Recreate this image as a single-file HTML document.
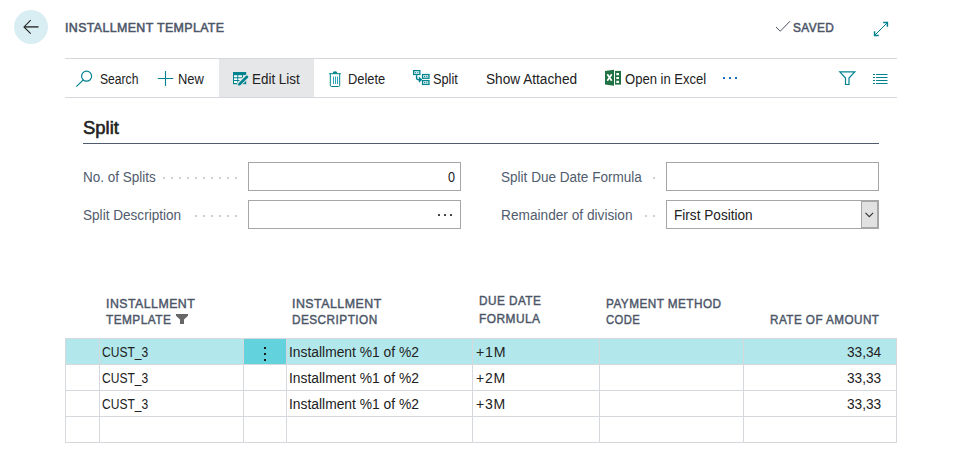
<!DOCTYPE html>
<html><head><meta charset="utf-8">
<style>
*{margin:0;padding:0;box-sizing:border-box}
html,body{width:958px;height:470px;overflow:hidden;background:#fff}
body{position:relative;font-family:"Liberation Sans",sans-serif;color:#212121}
.a{position:absolute;white-space:nowrap}
.t{font-size:14px;line-height:14px;color:#212121}
.din{font-weight:normal;color:#505a6b;-webkit-text-stroke:0.45px #505a6b}
.tt{-webkit-text-stroke:0.55px #4c5668;color:#4c5668;letter-spacing:0.4px}
.hd{font-size:12.9px;line-height:13px;letter-spacing:0.5px;transform-origin:0 0;-webkit-text-stroke:0.45px #4c5668;color:#4c5668}
svg{position:absolute;overflow:visible}
.lbl{font-size:14px;line-height:14px;color:#505c6d}
.dots{position:absolute;height:2px;background-image:linear-gradient(to right,#cdd1d6 2px,transparent 2px);background-size:8px 2px}
.inp{position:absolute;border:1px solid #a6a6a6;background:#fff}
.hl{position:absolute;background:#d5d8dc}
.vl{position:absolute;background:#d5d8dc;width:1px}
</style></head><body>

<!-- back button -->
<div class="a" style="left:14px;top:10px;width:34px;height:34px;border-radius:50%;background:#d9eef2"></div>
<svg style="left:23px;top:19px" width="16" height="16" viewBox="0 0 16 16"><path d="M1.5 7.9H15.5" stroke="#2a2a2a" stroke-width="1.4"/><path d="M7.7 1.2L1 7.9L7.7 14.6" fill="none" stroke="#222" stroke-width="1.1"/></svg>

<div class="a din tt" style="left:65px;top:20.5px;font-size:13.4px;line-height:14px;transform:scaleX(0.926);transform-origin:0 0">INSTALLMENT TEMPLATE</div>

<svg style="left:775px;top:20px" width="16" height="13" viewBox="0 0 16 13"><path d="M1 7L5.3 11.2L15 1.2" fill="none" stroke="#3f4656" stroke-width="0.95"/></svg>
<div class="a din tt" style="left:793px;top:20.5px;font-size:13.4px;line-height:14px;transform:scaleX(0.885);transform-origin:0 0">SAVED</div>
<svg style="left:873px;top:21px" width="16" height="16" viewBox="0 0 16 16"><path d="M2 14L14 2" stroke="#00838f" stroke-width="1"/><path d="M10.2 1.6H14.4V5.8M1.6 10.2V14.4H5.8" fill="none" stroke="#00838f" stroke-width="1.5"/></svg>

<!-- toolbar -->
<div class="hl" style="left:65px;top:58px;width:832px;height:1px"></div>
<div class="hl" style="left:65px;top:97px;width:832px;height:1px"></div>
<div class="a" style="left:219px;top:59px;width:95px;height:38px;background:#e6e7e8"></div>

<svg style="left:76px;top:70px" width="17" height="17" viewBox="0 0 17 17"><circle cx="10.6" cy="6.2" r="5" fill="none" stroke="#00838f" stroke-width="1.2"/><path d="M7.2 9.8L0.4 16.6" stroke="#00838f" stroke-width="1.2"/></svg>
<div class="a t" style="left:100px;top:72px;transform:scaleX(0.866);transform-origin:0 0">Search</div>

<svg style="left:157px;top:71px" width="16" height="16" viewBox="0 0 16 16"><path d="M8.5 0V15M0.8 7.5H16.2" stroke="#00838f" stroke-width="1.1"/></svg>
<div class="a t" style="left:178px;top:72px;transform:scaleX(0.925);transform-origin:0 0">New</div>

<svg style="left:232px;top:72px" width="17" height="14" viewBox="0 0 17 14"><rect x="1" y="0" width="13.2" height="12.2" fill="#00838f"/><path d="M2 3.3H5.3V5.3H2ZM6.2 3.3H10V5.3H6.2ZM11 3.3H13.2V5.3H11ZM2 6.2H5.3V8.1H2ZM6.2 6.2H10V8.1H6.2ZM2 9.1H5.3V11.1H2ZM6.2 9.1H9V11.1H6.2Z" fill="#fff"/><path d="M6.5 13L15.2 4.3" stroke="#e6e7e8" stroke-width="5"/><path d="M7.7 12L15 4.8" stroke="#00838f" stroke-width="2.6" stroke-linecap="round"/><path d="M5.8 13.8L7 10.8L8.8 12.6Z" fill="#00838f"/></svg>
<div class="a t" style="left:252px;top:72px;transform:scaleX(0.959);transform-origin:0 0">Edit List</div>

<svg style="left:329px;top:71px" width="12" height="16" viewBox="0 0 12 16"><path d="M0.2 2.7H11.8" stroke="#00838f" stroke-width="1"/><path d="M3.6 2.6Q3.6 0.3 6 0.3Q8.4 0.3 8.4 2.6Z" fill="#00838f"/><path d="M1.3 2.7V14.3Q1.3 15.5 2.5 15.5H9.5Q10.7 15.5 10.7 14.3V2.7" fill="none" stroke="#00838f" stroke-width="1"/><path d="M4.5 5.5V13M6.5 5.5V13M8.5 5.5V13" stroke="#1a9ab8" stroke-width="0.9"/></svg>
<div class="a t" style="left:348px;top:72px;transform:scaleX(0.918);transform-origin:0 0">Delete</div>

<svg style="left:413px;top:70px" width="17" height="16" viewBox="0 0 17 16"><rect x="0.65" y="0.65" width="6.2" height="3.8" fill="none" stroke="#00838f" stroke-width="1.3"/><circle cx="2.6" cy="2.55" r="0.65" fill="#00838f"/><circle cx="4.8" cy="2.55" r="0.65" fill="#00838f"/><path d="M3.6 5.3V8Q3.6 9.7 5.3 9.7H7" fill="none" stroke="#00838f" stroke-width="1.5"/><path d="M5.9 6.6L9.3 9.7L5.9 12.8Z" fill="#00838f"/><rect x="9.55" y="4.55" width="6.4" height="3.7" fill="none" stroke="#00838f" stroke-width="1.3"/><circle cx="11.7" cy="6.4" r="0.65" fill="#00838f"/><circle cx="13.8" cy="6.4" r="0.65" fill="#00838f"/><rect x="9.55" y="10.6" width="6.4" height="3.8" fill="none" stroke="#00838f" stroke-width="1.3"/><circle cx="11.7" cy="12.5" r="0.65" fill="#00838f"/><circle cx="13.8" cy="12.5" r="0.65" fill="#00838f"/></svg>
<div class="a t" style="left:433px;top:72px;transform:scaleX(0.911);transform-origin:0 0">Split</div>

<div class="a t" style="left:486px;top:72px;transform:scaleX(0.975);transform-origin:0 0">Show Attached</div>

<svg style="left:604px;top:69px" width="17" height="17" viewBox="0 0 17 17"><path d="M1 2.1L10 0.8V16.7L1 15.6Z" fill="#1f7244"/><path d="M3.3 5.2L7.7 11.8M7.7 5.2L3.3 11.8" stroke="#fff" stroke-width="1.7"/><rect x="11" y="1.9" width="6" height="13.7" fill="#1f7244"/><path d="M12.3 3.9H15V6.2H12.3ZM12.3 7.9H15V10.1H12.3ZM12.3 11.8H15V14.1H12.3Z" fill="#fff"/></svg>
<div class="a t" style="left:625px;top:72px;transform:scaleX(0.931);transform-origin:0 0">Open in Excel</div>

<div class="a" style="left:723px;top:77px;width:2px;height:2px;background:#0a60bf;border-radius:0.5px"></div>
<div class="a" style="left:729px;top:77px;width:2px;height:2px;background:#0a60bf;border-radius:0.5px"></div>
<div class="a" style="left:735px;top:77px;width:2px;height:2px;background:#0a60bf;border-radius:0.5px"></div>

<svg style="left:839px;top:71px" width="17" height="14" viewBox="0 0 17 14"><path d="M0.8 0.8H15.8L10 7V13.5H6.5V7Z" fill="none" stroke="#00838f" stroke-width="1.2"/></svg>
<svg style="left:873px;top:73px" width="15" height="12" viewBox="0 0 15 12"><path d="M0 1.5H2M3 1.5H14.5M0 4.5H2M3 4.5H14.5M0 7.5H2M3 7.5H14.5M0 10.5H2M3 10.5H14.5" stroke="#00838f" stroke-width="1"/></svg>

<!-- Split group -->
<div class="a" style="left:83px;top:119px;font-size:17.5px;line-height:18px;font-weight:normal;-webkit-text-stroke:0.55px #212121;color:#212121;transform:scaleX(1.053);transform-origin:0 0">Split</div>
<div class="a" style="left:83px;top:143px;width:796px;height:1px;background:#505c6d"></div>

<div class="a lbl" style="left:83px;top:170px;transform:scaleX(0.965);transform-origin:0 0">No. of Splits</div>
<div class="inp" style="left:248px;top:162px;width:213px;height:29px"></div>
<div class="a t" style="left:448px;top:170px;transform:scaleX(0.9);transform-origin:0 0">0</div>

<div class="a lbl" style="left:83px;top:208px;transform:scaleX(0.97);transform-origin:0 0">Split Description</div>
<div class="inp" style="left:248px;top:200px;width:213px;height:29px"></div>
<div class="a" style="left:438.0px;top:214px;width:2px;height:2px;border-radius:0.5px;background:#3a3a3a"></div>
<div class="a" style="left:444.0px;top:214px;width:2px;height:2px;border-radius:0.5px;background:#3a3a3a"></div>
<div class="a" style="left:450.0px;top:214px;width:2px;height:2px;border-radius:0.5px;background:#3a3a3a"></div>

<div class="a lbl" style="left:501px;top:170px;transform:scaleX(0.968);transform-origin:0 0">Split Due Date Formula</div>
<div class="inp" style="left:666px;top:162px;width:213px;height:29px"></div>

<div class="a lbl" style="left:501px;top:208px;transform:scaleX(0.977);transform-origin:0 0">Remainder of division</div>
<div class="inp" style="left:666px;top:200px;width:213px;height:29px"></div>
<div class="a t" style="left:674px;top:208px;transform:scaleX(0.972);transform-origin:0 0">First Position</div>
<div class="a" style="left:861px;top:200px;width:18px;height:29px;background:#e1e1e1;border:2px solid #a6a6a6;border-left-width:1px"></div>
<svg style="left:865px;top:212px" width="10" height="6" viewBox="0 0 10 6"><path d="M0.5 0.8L4.3 4.6L8.1 0.8" fill="none" stroke="#333" stroke-width="1.1"/></svg>

<div class="dots" style="left:163px;top:177px;width:74px"></div>
<div class="dots" style="left:195px;top:215px;width:42px"></div>
<div class="dots" style="left:653px;top:177px;width:2px"></div>
<div class="dots" style="left:645px;top:215px;width:10px"></div>
<!-- table header -->
<div class="a din hd" style="left:106px;top:297px;transform:scaleX(0.956)">INSTALLMENT</div>
<div class="a din hd" style="left:106px;top:313px;transform:scaleX(0.918)">TEMPLATE</div>
<svg style="left:176px;top:314px" width="12" height="10" viewBox="0 0 12 10"><path d="M0 0H12V1.8L8 5.4V10H4V5.4L0 1.8Z" fill="#666"/></svg>
<div class="a din hd" style="left:292px;top:297px;transform:scaleX(0.961)">INSTALLMENT</div>
<div class="a din hd" style="left:292px;top:313px;transform:scaleX(0.915)">DESCRIPTION</div>
<div class="a din hd" style="left:479px;top:294px;transform:scaleX(0.913)">DUE DATE</div>
<div class="a din hd" style="left:479px;top:312px;transform:scaleX(0.925)">FORMULA</div>
<div class="a din hd" style="left:606px;top:297px;transform:scaleX(0.912)">PAYMENT METHOD</div>
<div class="a din hd" style="left:606px;top:313px;transform:scaleX(0.873)">CODE</div>
<div class="a din hd" style="left:770px;top:313px;transform:scaleX(0.907)">RATE OF AMOUNT</div>

<!-- table rows -->
<div class="a" style="left:65px;top:338px;width:832px;height:27px;background:#b2e8ec"></div>
<div class="a" style="left:244px;top:339px;width:42px;height:25px;background:#62d2dc"></div>
<div class="a" style="left:264px;top:347px;width:2px;height:2px;background:#1a1a1a"></div>
<div class="a" style="left:264px;top:353px;width:2px;height:2px;background:#1a1a1a"></div>
<div class="a" style="left:264px;top:359px;width:2px;height:2px;background:#1a1a1a"></div>

<div class="hl" style="left:65px;top:338px;width:832px;height:1px"></div>
<div class="hl" style="left:65px;top:364px;width:832px;height:1px"></div>
<div class="hl" style="left:65px;top:390px;width:832px;height:1px"></div>
<div class="hl" style="left:65px;top:416px;width:832px;height:1px"></div>
<div class="hl" style="left:65px;top:442px;width:832px;height:1px"></div>
<div class="vl" style="left:65px;top:338px;height:105px"></div>
<div class="vl" style="left:99px;top:338px;height:105px"></div>
<div class="vl" style="left:243px;top:338px;height:105px"></div>
<div class="vl" style="left:286px;top:338px;height:105px"></div>
<div class="vl" style="left:472px;top:338px;height:105px"></div>
<div class="vl" style="left:599px;top:338px;height:105px"></div>
<div class="vl" style="left:743px;top:338px;height:105px"></div>
<div class="vl" style="left:896px;top:338px;height:105px"></div>

<div class="a t" style="left:102px;top:345px;transform:scaleX(0.86);transform-origin:0 0">CUST_3</div>
<div class="a t" style="left:289px;top:345px;transform:scaleX(0.988);transform-origin:0 0">Installment %1 of %2</div>
<div class="a t" style="left:476px;top:345px;letter-spacing:0.8px;transform:scaleX(1.012);transform-origin:0 0">+1M</div>
<div class="a t" style="left:847px;top:345px;transform:scaleX(0.977);transform-origin:0 0">33,34</div>

<div class="a t" style="left:102px;top:371px;transform:scaleX(0.86);transform-origin:0 0">CUST_3</div>
<div class="a t" style="left:289px;top:371px;transform:scaleX(0.988);transform-origin:0 0">Installment %1 of %2</div>
<div class="a t" style="left:476px;top:371px;letter-spacing:0.8px;transform:scaleX(1.0);transform-origin:0 0">+2M</div>
<div class="a t" style="left:847px;top:371px;transform:scaleX(0.977);transform-origin:0 0">33,33</div>

<div class="a t" style="left:102px;top:397px;transform:scaleX(0.86);transform-origin:0 0">CUST_3</div>
<div class="a t" style="left:289px;top:397px;transform:scaleX(0.988);transform-origin:0 0">Installment %1 of %2</div>
<div class="a t" style="left:476px;top:397px;letter-spacing:0.8px;transform:scaleX(1.0);transform-origin:0 0">+3M</div>
<div class="a t" style="left:847px;top:397px;transform:scaleX(0.977);transform-origin:0 0">33,33</div>

</body></html>
